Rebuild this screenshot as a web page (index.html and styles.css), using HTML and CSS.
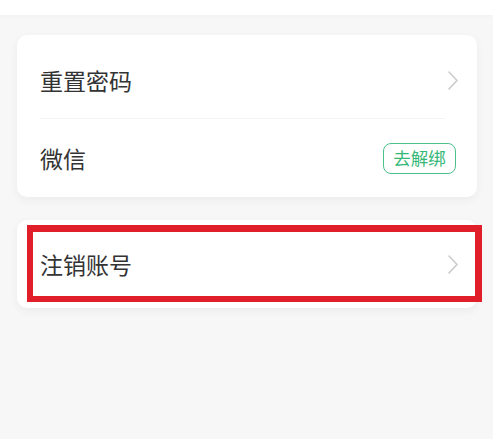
FILE: index.html
```html
<!DOCTYPE html>
<html lang="zh-CN">
<head>
<meta charset="utf-8">
<title>账号设置</title>
<link rel="stylesheet" href="styles.css">
</head>
<body>
<div class="topbar"></div>
<main class="page">
  <section class="card card-main">
    <div class="row row-first">
      <span class="label">重置密码</span>
      <svg class="chevron" viewBox="0 0 10 19" width="10" height="19"><path d="M1 1 L9 9.5 L1 18" fill="none" stroke="#c9c9c9" stroke-width="1.5" stroke-linecap="round" stroke-linejoin="round"/></svg>
    </div>
    <div class="divider"></div>
    <div class="row row-second">
      <span class="label">微信</span>
      <span class="btn-unbind">去解绑</span>
    </div>
  </section>
  <section class="card card-cancel">
    <div class="row row-cancel">
      <span class="label">注销账号</span>
      <svg class="chevron" viewBox="0 0 10 19" width="10" height="19"><path d="M1 1 L9 9.5 L1 18" fill="none" stroke="#c9c9c9" stroke-width="1.5" stroke-linecap="round" stroke-linejoin="round"/></svg>
    </div>
    <div class="highlight"></div>
  </section>
</main>
</body>
</html>
```

FILE: styles.css
```css
html, body {
  margin: 0;
  padding: 0;
}
body {
  width: 493px;
  height: 439px;
  overflow: hidden;
  background: #f7f7f7;
  font-family: "Noto Sans CJK SC", "Noto Sans", sans-serif;
  color: #333333;
}
.topbar {
  height: 15px;
  background: #ffffff;
  box-shadow: 0 1px 6px rgba(0, 0, 0, 0.03);
}
.page {
  padding: 20px 16px 0 17px;
  display: flex;
  flex-direction: column;
  gap: 23px;
}
.card {
  background: #ffffff;
  border-radius: 10px;
  box-shadow: 0 3px 10px rgba(0, 0, 0, 0.05);
}
.card-main {
  padding-top: 8px;
}
.row {
  display: flex;
  align-items: center;
  justify-content: space-between;
  padding: 0 19px 0 23px;
}
.row-first {
  height: 75px;
}
.row-second {
  height: 78px;
  padding-right: 21px;
}
.label {
  font-size: 23px;
  line-height: 1;
}
.chevron {
  display: block;
}
.divider {
  height: 1px;
  margin: 0 32px 0 23px;
  background: #f4f4f4;
}
.btn-unbind {
  box-sizing: border-box;
  width: 73px;
  height: 31px;
  display: flex;
  align-items: center;
  justify-content: center;
  border: 1.5px solid #4cc08a;
  border-radius: 8px;
  color: #35b877;
  font-size: 17.5px;
  line-height: 1;
}
.card-cancel {
  position: relative;
}
.row-cancel {
  height: 88px;
}
.highlight {
  position: absolute;
  left: 10px;
  top: 5px;
  width: 455px;
  height: 77px;
  box-sizing: border-box;
  border-style: solid;
  border-color: #e11f2a;
  border-width: 7px 7px 6px 6px;
  pointer-events: none;
}
```
